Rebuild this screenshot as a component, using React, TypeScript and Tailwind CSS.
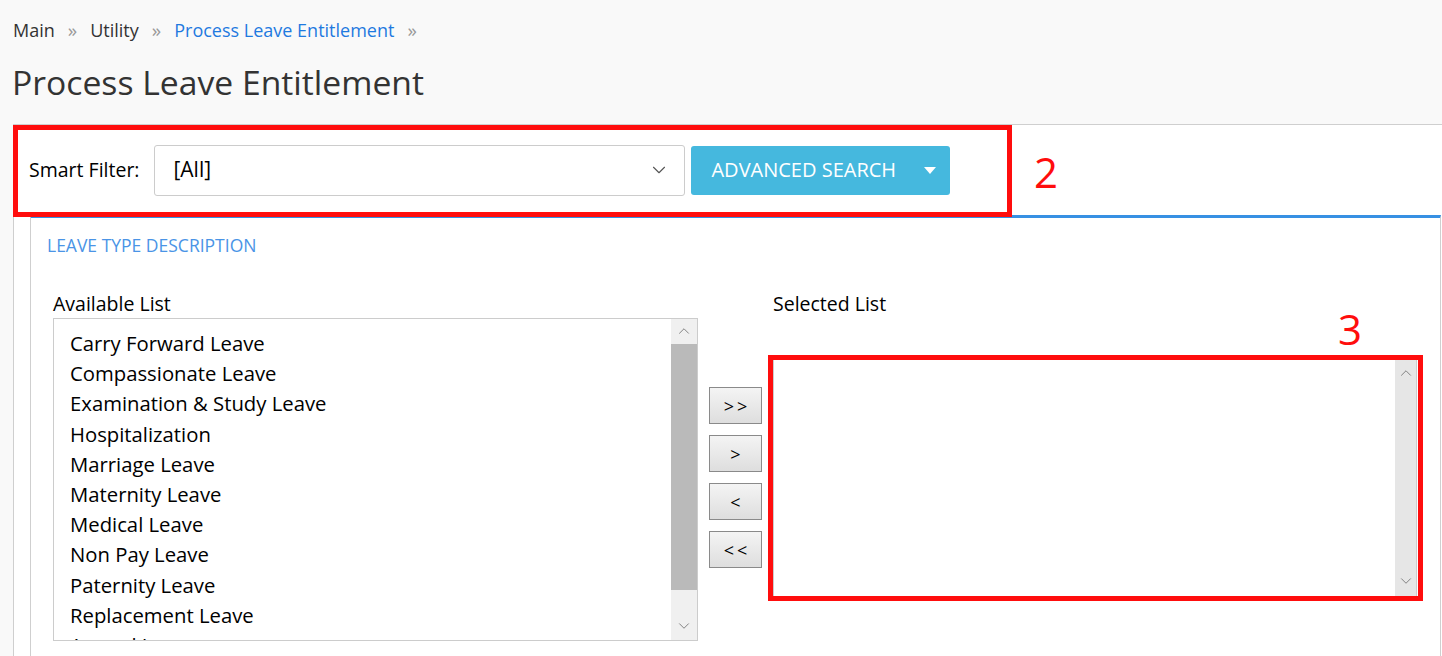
import React from "react";
import { ChevronDown, ChevronUp } from "lucide-react";

const leaveTypes = [
  "Carry Forward Leave",
  "Compassionate Leave",
  "Examination & Study Leave",
  "Hospitalization",
  "Marriage Leave",
  "Maternity Leave",
  "Medical Leave",
  "Non Pay Leave",
  "Paternity Leave",
  "Replacement Leave",
  "Annual Leave",
];

function Crumb({ label, active }: { label: string; active?: boolean }) {
  return (
    <>
      <span className={active ? "text-[#1f7ae0]" : "text-[#333]"}>{label}</span>
      <span className="text-[#9a9a9a] px-[13px] text-[19px]">»</span>
    </>
  );
}

function MoveButton({ label }: { label: string }) {
  return (
    <button className="w-[53px] h-[37px] border border-[#8a8a8a] bg-gradient-to-b from-[#f4f4f4] to-[#dedede] text-[18px] text-black leading-none tracking-[3px] pl-[3px]">
      {label}
    </button>
  );
}

export default function App() {
  return (
    <div
      className="relative min-h-[656px] h-[656px] overflow-hidden bg-[#f9f9f9] text-[#333]"
      style={{ fontFamily: '"Open Sans", "Noto Sans", sans-serif' }}
    >
      {/* breadcrumb */}
      <div className="flex items-center pt-[18px] pl-[13px] text-[18px] leading-[24px]">
        <Crumb label="Main" />
        <Crumb label="Utility" />
        <Crumb label="Process Leave Entitlement" active />
      </div>

      <h1 className="pl-[12px] mt-[20px] text-[33.7px] leading-[40px] text-[#333]">
        Process Leave Entitlement
      </h1>

      {/* content */}
      <div className="ml-[13px] mt-[22px] border-l border-t border-[#cfcfcf] bg-white h-[600px]">
        <div className="flex items-center h-[90px] pl-[15px]">
          <span className="text-[19.5px] text-black mr-[15px]">Smart Filter:</span>
          <div className="w-[531px] h-[51px] border border-[#cccccc] rounded-[3px] flex items-center justify-between pl-[18px] pr-[14px] bg-white">
            <span className="text-[21px] text-black">[All]</span>
            <ChevronDown size={22} strokeWidth={1.2} className="text-[#555]" />
          </div>
          <button className="ml-[6px] w-[259px] h-[49px] bg-[#45b8de] rounded-[3px] flex items-center pl-[20px] pr-[10px] text-white text-[20px]">
            <span>ADVANCED SEARCH</span>
            <span className="ml-auto w-0 h-0 border-l-[6px] border-r-[6px] border-t-[7px] border-l-transparent border-r-transparent border-t-white mr-[4px]" />
          </button>
        </div>

        <div className="ml-[16px] mr-[1px] border-t-[3px] border-t-[#3790e3] border-l border-r border-[#cfcfcf] h-[520px] bg-white">
          <div className="pl-[16px] pt-[14px] text-[17.5px] leading-[26px] text-[#4a94e6] uppercase">
            Leave Type Description
          </div>

          <div className="flex pl-[22px] pt-[34px]">
            <div className="flex flex-col">
              <span className="text-[19.5px] text-black leading-[24px]">Available List</span>
              <div className="mt-[2px] w-[645px] h-[323px] border border-[#cccccc] flex overflow-hidden">
                <div className="flex-1 pl-[16px] pt-[9px] overflow-hidden">
                  {leaveTypes.map((t) => (
                    <div key={t} className="text-[20.3px] leading-[30.2px] text-black whitespace-nowrap">
                      {t}
                    </div>
                  ))}
                </div>
                <div className="w-[26px] bg-[#f0f0f0] flex flex-col items-center">
                  <ChevronUp size={18} strokeWidth={1.2} className="text-[#777] mt-[3px]" />
                  <div className="w-full bg-[#bababa] h-[246px] mt-[4px]" />
                  <ChevronDown size={18} strokeWidth={1.2} className="text-[#777] mt-[27px]" />
                </div>
              </div>
            </div>

            <div className="flex flex-col gap-[11px] ml-[11px] mt-[95px]">
              <MoveButton label=">>" />
              <MoveButton label=">" />
              <MoveButton label="<" />
              <MoveButton label="<<" />
            </div>

            <div className="flex flex-col ml-[11px]">
              <span className="text-[19.5px] text-black leading-[24px]">Selected List</span>
              <div className="mt-[43px] w-[644px] h-[238px] border border-[#cccccc] flex">
                <div className="flex-1" />
                <div className="w-[21px] bg-[#e6e6e6] flex flex-col items-center justify-between pt-[4px] pb-[6px]">
                  <ChevronUp size={18} strokeWidth={1.2} className="text-[#777]" />
                  <ChevronDown size={18} strokeWidth={1.2} className="text-[#777]" />
                </div>
              </div>
            </div>
          </div>
        </div>
      </div>

      {/* annotation overlays */}
      <div className="absolute left-[13px] top-[125px] w-[999px] h-[92px] border-[5px] border-[#ff0d0d] pointer-events-none" />
      <div className="absolute left-[1034px] top-[146px] text-[42px] leading-[52px] text-[#ff0d0d]">2</div>
      <div className="absolute left-[768px] top-[355px] w-[655px] h-[246px] border-[5px] border-[#ff0d0d] pointer-events-none" />
      <div className="absolute left-[1338px] top-[303px] text-[42px] leading-[52px] text-[#ff0d0d]">3</div>
    </div>
  );
}
